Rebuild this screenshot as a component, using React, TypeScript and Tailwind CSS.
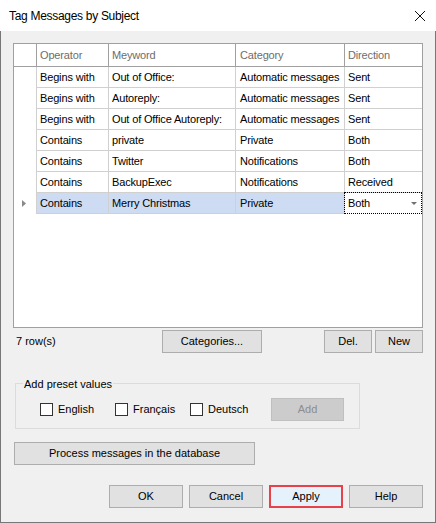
const rows = [
  ["Begins with", "Out of Office:", "Automatic messages", "Sent"],
  ["Begins with", "Autoreply:", "Automatic messages", "Sent"],
  ["Begins with", "Out of Office Autoreply:", "Automatic messages", "Sent"],
  ["Contains", "private", "Private", "Both"],
  ["Contains", "Twitter", "Notifications", "Both"],
  ["Contains", "BackupExec", "Notifications", "Received"],
];

function Btn({ label, className = "" }: { label: string; className?: string }) {
  return (
    <div
      className={`h-[23px] flex items-center justify-center bg-[#e1e1e1] border border-[#adadad] ${className}`}
    >
      {label}
    </div>
  );
}

function Check({ label, className = "" }: { label: string; className?: string }) {
  return (
    <div className={`flex items-center ${className}`}>
      <div className="w-[13px] h-[13px] bg-white border border-[#333]" />
      <span className="ml-[5px]">{label}</span>
    </div>
  );
}

export default function App() {
  return (
    <div className="w-[436px] h-[523px] flex flex-col font-['Liberation_Sans',Arial,sans-serif] text-[11px] text-black">
      <div className="h-[31px] bg-white flex items-center justify-between pl-[9px] pr-[10px]">
        <span className="text-[12px] tracking-[-0.3px]">Tag Messages by Subject</span>
        <svg width="12" height="12" viewBox="0 0 12 12" className="mt-[1px] ml-[2px]">
          <path d="M1 1 L11 11 M11 1 L1 11" stroke="#111" strokeWidth="1" />
        </svg>
      </div>

      <div className="flex-1 bg-[#f0f0f0] border-x border-b border-[#777] pl-[12px] pt-[12px] flex flex-col">
        {/* grid */}
        <div className="w-[410px] h-[285px] border border-[#a0a0a0] bg-white tracking-[-0.15px]">
          <div className="flex h-[23px] border-b border-[#a0a0a0] text-[#6d6d6d]">
            <div className="w-[23px] border-r border-[#a0a0a0]" />
            <div className="w-[72px] border-r border-[#a0a0a0] pl-[3px] flex items-center">Operator</div>
            <div className="w-[127px] border-r border-[#a0a0a0] pl-[3px] flex items-center">Meyword</div>
            <div className="w-[109px] border-r border-[#a0a0a0] pl-[4px] flex items-center">Category</div>
            <div className="w-[77px] pl-[3px] flex items-center">Direction</div>
          </div>
          {rows.map((r, i) => (
            <div key={i} className="flex h-[21px]">
              <div className="w-[23px] border-r border-[#d0d0d0]" />
              <div className="w-[72px] border-r border-b border-[#d0d0d0] pl-[3px] flex items-center">{r[0]}</div>
              <div className="w-[127px] border-r border-b border-[#d0d0d0] pl-[3px] flex items-center">{r[1]}</div>
              <div className="w-[109px] border-r border-b border-[#d0d0d0] pl-[4px] flex items-center">{r[2]}</div>
              <div className="w-[77px] border-b border-[#d0d0d0] pl-[3px] flex items-center">{r[3]}</div>
            </div>
          ))}
          <div className="flex h-[21px]">
            <div className="w-[23px] border-r border-[#d0d0d0] flex items-center pl-[8px]">
              <svg width="5" height="7" viewBox="0 0 5 7">
                <path d="M0 0 L4 3.5 L0 7 Z" fill="#8a8a8a" />
              </svg>
            </div>
            <div className="w-[72px] border-r border-b border-[#d0d0d0] bg-[#cddcf3] pl-[3px] flex items-center">Contains</div>
            <div className="w-[127px] border-r border-b border-[#d0d0d0] bg-[#cddcf3] pl-[3px] flex items-center">Merry Christmas</div>
            <div className="w-[109px] border-r border-b border-[#d0d0d0] bg-[#cddcf3] pl-[4px] flex items-center">Private</div>
            <div className="border border-dotted border-black -ml-px -mt-px h-[22px] w-[78px] pl-[3px] flex items-center justify-between pr-[4px]">
              <span>Both</span>
              <svg width="6" height="3" viewBox="0 0 6 3">
                <path d="M0 0 L6 0 L3 3 Z" fill="#707070" />
              </svg>
            </div>
          </div>
        </div>

        {/* toolbar row */}
        <div className="flex h-[23px] mt-[2px] items-center">
          <span className="w-[146px] ml-[3px]">7 row(s)</span>
          <Btn label="Categories..." className="w-[100px]" />
          <Btn label="Del." className="w-[48px] ml-[62px]" />
          <Btn label="New" className="w-[48px] ml-[3px]" />
        </div>

        {/* preset group */}
        <div className="relative ml-[2px] mt-[30px] w-[345px] h-[46px] border border-[#dcdcdc]">
          <span className="absolute -top-[7px] left-[7px] px-[1px] bg-[#f0f0f0] leading-[14px]">
            Add preset values
          </span>
          <div className="flex items-center h-[23px] mt-[14px] pl-[24px]">
            <Check label="English" className="w-[75px]" />
            <Check label="Français" className="w-[75px]" />
            <Check label="Deutsch" className="w-[81px]" />
            <div className="w-[73px] h-[23px] flex items-center justify-center bg-[#cccccc] border border-[#bfbfbf] text-[#8d8d8d]">
              Add
            </div>
          </div>
        </div>

        <Btn label="Process messages in the database" className="w-[241px] ml-[1px] mt-[13px]" />

        <div className="flex gap-[6px] ml-[96px] mt-[20px]">
          <Btn label="OK" className="w-[74px]" />
          <Btn label="Cancel" className="w-[74px]" />
          <div className="w-[74px] h-[23px] flex items-center justify-center bg-[#e5f1fb] border-2 border-[#e8414a]">
            Apply
          </div>
          <Btn label="Help" className="w-[74px]" />
        </div>
      </div>
    </div>
  );
}
